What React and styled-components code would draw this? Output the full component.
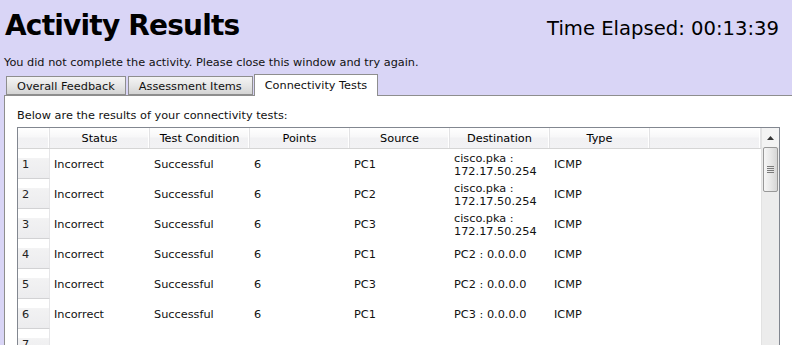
import React from 'react';
import styled, { createGlobalStyle } from 'styled-components';

const GlobalStyle = createGlobalStyle`
    html, body {
        margin: 0;
        padding: 0;
        overflow: hidden;
    }
    body {
        background: #d9d5f6;
        font-family: "DejaVu Sans", Verdana, sans-serif;
        color: #111;
    }
`;

const Page = styled.div`
    display: flex;
    flex-direction: column;
    height: 345px;
    overflow: hidden;
`;

const HeaderBar = styled.div`
    display: flex;
    justify-content: space-between;
    align-items: baseline;
    padding: 9px 13px 0 5px;
`;

const Title = styled.h1`
    margin: 0;
    font-size: 28px;
    line-height: 34px;
    font-weight: bold;
    letter-spacing: -0.8px;
    color: #000;
`;

const Timer = styled.div`
    font-size: 19.6px;
    line-height: 24px;
    color: #000;
`;

const Message = styled.div`
    padding: 13px 0 0 4px;
    font-size: 11.3px;
    line-height: 14px;
`;

const TabStrip = styled.div`
    display: flex;
    align-items: flex-end;
    gap: 2px;
    margin: 4px 0 0 6px;
    position: relative;
    z-index: 1;
`;

const Tab = styled.div`
    box-sizing: border-box;
    height: ${p => (p.$active ? '22px' : '19px')};
    margin-bottom: ${p => (p.$active ? '-1px' : '0')};
    margin-left: ${p => (p.$active ? '-1px' : '0')};
    padding: 0 10px;
    display: flex;
    align-items: center;
    font-size: 11.3px;
    border: 1px solid #8e8e8e;
    border-bottom: ${p => (p.$active ? 'none' : '1px solid #8e8e8e')};
    background: ${p => (p.$active ? '#fff' : 'linear-gradient(#f4f4f4, #e6e6e6 50%, #d4d4d4)')};
    padding-top: ${p => (p.$active ? '0' : '1px')};
`;

const Panel = styled.div`
    flex: 1;
    margin: 0 -4px 0 4px;
    background: #fff;
    border-top: 1px solid #8e8e8e;
    border-left: 1px solid #8e8e8e;
    padding: 13px 0 0 12px;
`;

const Intro = styled.div`
    font-size: 11.3px;
    line-height: 14px;
    margin-bottom: 4px;
`;

const GridBox = styled.div`
    width: 763px;
    box-sizing: border-box;
    border: 1px solid #828790;
    display: flex;
`;

const Table = styled.div`
    flex: 1;
    display: flex;
    flex-direction: column;
`;

const Row = styled.div`
    display: grid;
    flex-shrink: 0;
    grid-template-columns: 32px repeat(6, 100px) 1fr;
    height: ${p => (p.$head ? '20px' : '30px')};
    border-bottom: ${p => (p.$head ? '1px solid #d5d5d5' : 'none')};
`;

const HeadCell = styled.div`
    display: flex;
    align-items: center;
    justify-content: center;
    padding-top: 1px;
    font-size: 11.3px;
    color: #000;
    background: linear-gradient(#ffffff, #f7f7f8 45%, #f1f1f3 50%, #f2f2f4);
    border-right: 1px solid #e2e2e4;
    box-shadow: inset -1px 0 0 #fff;
`;

const RowHead = styled.div`
    box-sizing: border-box;
    padding: 2px 4px 0;
    display: flex;
    align-items: center;
    font-size: 11.3px;
    color: #222;
    background: linear-gradient(#fff 0%, #fff 30%, #f2f2f3 33%, #ececee 100%);
    border-bottom: 1px solid #d2d2d4;
    border-right: 1px solid #e6e6e8;
`;

const Cell = styled.div`
    padding: 3px 4px 0;
    display: flex;
    align-items: center;
    font-size: 11.3px;
    line-height: 12.5px;
    color: #111;
`;

const ScrollBar = styled.div`
    width: 17px;
    display: flex;
    flex-direction: column;
    background: #ececec;
    border-left: 1px solid #e2e2e2;
`;

const ArrowButton = styled.div`
    height: 19px;
    display: flex;
    align-items: center;
    justify-content: center;
    background: #f3f3f3;
`;

const Thumb = styled.div`
    margin: 0 1px;
    height: 45px;
    box-sizing: border-box;
    border: 1px solid #989898;
    border-radius: 2px;
    background: linear-gradient(to right, #f6f6f6, #e8e8e8 50%, #d6d6d6);
    display: flex;
    align-items: center;
    justify-content: center;
`;

const TABS = ['Overall Feedback', 'Assessment Items', 'Connectivity Tests'];
const COLUMNS = ['Status', 'Test Condition', 'Points', 'Source', 'Destination', 'Type'];
const RESULTS = [
    ['Incorrect', 'Successful', '6', 'PC1', 'cisco.pka : 172.17.50.254', 'ICMP'],
    ['Incorrect', 'Successful', '6', 'PC2', 'cisco.pka : 172.17.50.254', 'ICMP'],
    ['Incorrect', 'Successful', '6', 'PC3', 'cisco.pka : 172.17.50.254', 'ICMP'],
    ['Incorrect', 'Successful', '6', 'PC1', 'PC2 : 0.0.0.0', 'ICMP'],
    ['Incorrect', 'Successful', '6', 'PC3', 'PC2 : 0.0.0.0', 'ICMP'],
    ['Incorrect', 'Successful', '6', 'PC1', 'PC3 : 0.0.0.0', 'ICMP'],
    ['', '', '', '', '', ''],
    ['', '', '', '', '', ''],
];

const App = () => {
    return (
        <Page>
            <GlobalStyle />
            <HeaderBar>
                <Title>Activity Results</Title>
                <Timer>Time Elapsed: 00:13:39</Timer>
            </HeaderBar>
            <Message>You did not complete the activity. Please close this window and try again.</Message>
            <TabStrip>
                {TABS.map((t, i) => (
                    <Tab key={t} $active={i === 2}>{t}</Tab>
                ))}
            </TabStrip>
            <Panel>
                <Intro>Below are the results of your connectivity tests:</Intro>
                <GridBox>
                    <Table>
                        <Row $head>
                            <HeadCell />
                            {COLUMNS.map(c => <HeadCell key={c}>{c}</HeadCell>)}
                            <HeadCell />
                        </Row>
                        {RESULTS.map((r, i) => (
                            <Row key={i}>
                                <RowHead>{i + 1}</RowHead>
                                {r.map((v, j) => <Cell key={j}>{v}</Cell>)}
                                <Cell />
                            </Row>
                        ))}
                    </Table>
                    <ScrollBar>
                        <ArrowButton>
                            <svg width="7" height="4" viewBox="0 0 7 4">
                                <path d="M0 4 L3.5 0 L7 4 Z" fill="#333" />
                            </svg>
                        </ArrowButton>
                        <Thumb>
                            <svg width="7" height="7" viewBox="0 0 7 7">
                                <path d="M0 0.5H7M0 2.5H7M0 4.5H7M0 6.5H7" stroke="#7a7a7a" strokeWidth="1" />
                            </svg>
                        </Thumb>
                    </ScrollBar>
                </GridBox>
            </Panel>
        </Page>
    );
};

export default App;
